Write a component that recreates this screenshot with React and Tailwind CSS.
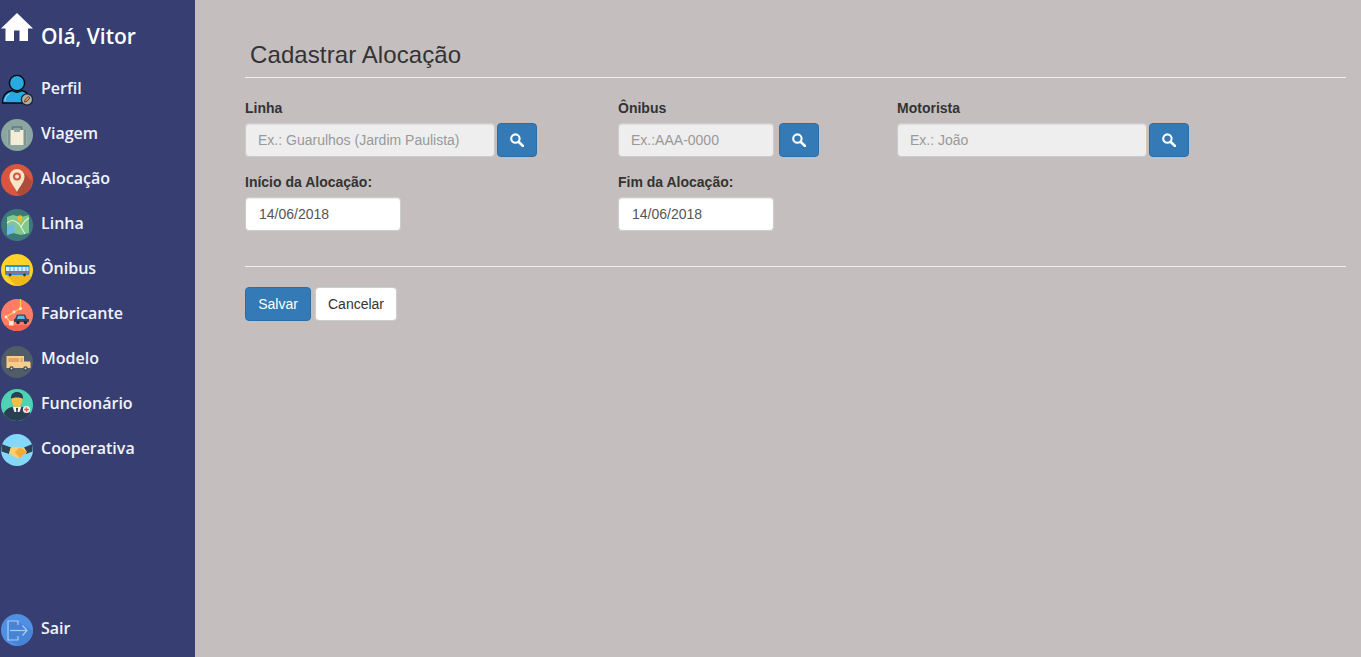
import React from 'react';

const IconPerfil = () => (
  <svg viewBox="0 0 32 32" className="w-8 h-8">
    <circle cx="16" cy="9" r="7.6" fill="#29a9e0" stroke="#05070f" strokeWidth="1.4" />
    <path d="M1.5 29 C1.5 21 6 17.5 11 16.5 C14 18.5 18 18.5 21 16.5 C25 17.5 27.5 20 28 24 L23 29 Z" fill="#29a9e0" stroke="#05070f" strokeWidth="1.4" />
    <path d="M4 27 C4 23.5 6 21 8.5 20" fill="none" stroke="#a5dcf5" strokeWidth="1" />
    <circle cx="26" cy="25.5" r="5.6" fill="#a8adb2" stroke="#20242c" strokeWidth="1.3" />
    <path d="M23.5 28 L24 25.6 L27.4 22.4 L29 24 L25.8 27.4 Z" fill="#ee8a25" stroke="#1a1a1a" strokeWidth="0.6" />
  </svg>
);

const IconViagem = () => (
  <svg viewBox="0 0 32 32" className="w-8 h-8">
    <circle cx="16" cy="16" r="16" fill="#8ba6a0" />
    <path d="M11.5 11 V8 H20.5 V11" fill="none" stroke="#66797a" strokeWidth="1.6" />
    <rect x="6.5" y="11" width="19" height="15" rx="1" fill="#f3ecd6" />
    <rect x="6.5" y="11" width="3" height="15" fill="#7f9390" />
    <rect x="22.5" y="11" width="3" height="15" fill="#7f9390" />
    <rect x="13" y="11" width="6" height="2" fill="#9aa8a2" />
  </svg>
);

const IconAlocacao = () => (
  <svg viewBox="0 0 32 32" className="w-8 h-8">
    <circle cx="16" cy="16" r="16" fill="#d9553f" />
    <path d="M20 6 L31 17 A16 16 0 0 1 19 31.7 L15 28 Z" fill="#b04a39" />
    <path d="M16 28 C13 22 8.5 18 8.5 12.5 A7.5 7.5 0 0 1 23.5 12.5 C23.5 18 19 22 16 28 Z" fill="#f6e6c8" />
    <circle cx="16" cy="12.5" r="4" fill="#d9553f" />
    <circle cx="16" cy="12.5" r="2" fill="#f6e6c8" />
  </svg>
);

const IconLinha = () => (
  <svg viewBox="0 0 32 32" className="w-8 h-8">
    <circle cx="16" cy="16" r="16" fill="#3b7a78" />
    <path d="M6 8 L12 6 L20 8 L28 6 V24 L20 26 L12 24 L6 26 Z" fill="#7fc98f" />
    <path d="M6 17 L13 15 L14 24 L12 24 L6 26 Z" fill="#6fb9e0" />
    <path d="M6 14 C10 10 14 11 18 15 C20 18 22 21 24 25 M28 9 C24 11 22 14 20 18" fill="none" stroke="#e8f2d8" strokeWidth="1.1" />
    <path d="M19 14 C17 11 16.5 10 16.5 8.8 A2.5 2.5 0 0 1 21.5 8.8 C21.5 10 21 11 19 14 Z" fill="#f1b82d" />
  </svg>
);

const IconOnibus = () => (
  <svg viewBox="0 0 32 32" className="w-8 h-8">
    <circle cx="16" cy="16" r="16" fill="#ffd32a" />
    <path d="M5 21 L28 21 L30.5 23 A16 16 0 0 1 15 31.8 Z" fill="#efb81f" />
    <rect x="4" y="11" width="24.5" height="10" rx="1.2" fill="#2f8fd0" />
    <rect x="5" y="13" width="22.5" height="4" fill="#d4eefb" />
    <path d="M9 13 V17 M13 13 V17 M17 13 V17 M21 13 V17 M25 13 V17" stroke="#2f8fd0" strokeWidth="0.7" />
    <rect x="4" y="18.5" width="24.5" height="1.3" fill="#e2574c" />
    <circle cx="9" cy="21" r="1.4" fill="#2d3a4a" />
    <circle cx="23.5" cy="21" r="1.4" fill="#2d3a4a" />
  </svg>
);

const IconFabricante = () => (
  <svg viewBox="0 0 32 32" className="w-8 h-8">
    <circle cx="16" cy="16" r="16" fill="#ff7d66" />
    <path d="M3.5 26 A16 16 0 0 0 28.5 26 Z" fill="#f4614c" />
    <path d="M19.5 0 V9.5 L13 13 L5 18 L10 24" fill="none" stroke="#f8d24e" strokeWidth="1.2" />
    <circle cx="19.5" cy="9.5" r="1.6" fill="#fbe9d8" />
    <circle cx="13" cy="13" r="1.4" fill="#fbe9d8" />
    <circle cx="5" cy="18" r="1.4" fill="#fbe9d8" />
    <rect x="8" y="22" width="4.5" height="4.5" fill="#fbe9d8" />
    <path d="M14 20 L16 15.5 H24 L26 20 H28 V23 H13 V20 Z" fill="#34475a" />
    <path d="M16 20 L17 16.8 H23 L24 20 Z" fill="#5fb8e8" />
    <circle cx="17" cy="23.5" r="1.7" fill="#1f2a36" />
    <circle cx="24.5" cy="23.5" r="1.7" fill="#1f2a36" />
  </svg>
);

const IconModelo = () => (
  <svg viewBox="0 0 32 32" className="w-8 h-8">
    <circle cx="16" cy="16" r="16" fill="#505c68" />
    <path d="M5.5 10 H23 V15.5 H28.5 Q29.5 15.5 29.5 17 V22 H5.5 Z" fill="#f6cd8c" />
    <rect x="7.5" y="12" width="10.5" height="4" fill="#e2a566" />
    <rect x="19.5" y="12" width="2.2" height="4" fill="#e2a566" />
    <circle cx="10.5" cy="22.5" r="2.2" fill="#3a434d" />
    <circle cx="10.5" cy="22.5" r="1" fill="#dcdcdc" />
    <circle cx="24.5" cy="22.5" r="2.2" fill="#3a434d" />
    <circle cx="24.5" cy="22.5" r="1" fill="#dcdcdc" />
  </svg>
);

const IconFuncionario = () => (
  <svg viewBox="0 0 32 32" className="w-8 h-8">
    <circle cx="16" cy="16" r="16" fill="#4dd3b4" />
    <path d="M2.5 24.5 C5 20 8 18.5 12 17.5 H20 C24 18.5 27 20 29.5 24.5 A16 16 0 0 1 2.5 24.5 Z" fill="#2a3f52" />
    <path d="M11.5 17.5 H20.5 L18.5 23 H13.5 Z" fill="#f4f6f6" />
    <path d="M15 19 H17 L16.6 23 H15.4 Z" fill="#1f2d3a" />
    <path d="M10.5 8 C10.5 14 12.5 18.5 16 18.5 C19.5 18.5 21.5 14 21.5 8 Z" fill="#f6be43" />
    <path d="M10 10 C9.5 5 12.5 3 16 3 C19.5 3 22.5 5 22 10 C20.5 8 11.5 8 10 10 Z" fill="#2a3f52" />
    <circle cx="25.5" cy="20.5" r="3.6" fill="#f0f4f4" />
    <path d="M25.5 18.2 V22.8 M23.2 20.5 H27.8" stroke="#ec4f43" strokeWidth="1.4" />
  </svg>
);

const IconCooperativa = () => (
  <svg viewBox="0 0 32 32" className="w-8 h-8">
    <circle cx="16" cy="16" r="16" fill="#84d9fb" />
    <path d="M0.5 10 L10 13.5 L8 20 L0.5 17.5 Z" fill="#2f4155" />
    <path d="M31.5 10 L23 13.5 L25 20 L31.5 17.5 Z" fill="#2f4155" />
    <path d="M9.5 14 L14 12.5 L18 13.5 L23 13.5 L26 18 L19 24 C17 24.5 15 24 14 23 L8 19.5 Z" fill="#fbd06a" />
    <path d="M14 18 L18 14 L21 14.5 L25.5 18 L19 24 L16 21" fill="#f2aa3d" />
  </svg>
);

const IconSair = () => (
  <svg viewBox="0 0 32 32" className="w-8 h-8">
    <circle cx="16" cy="16" r="16" fill="#4f90e4" />
    <path d="M20 9 L32 17 A16 16 0 0 1 18 31.8 L8 26 V7 Z" fill="#4784d6" />
    <path d="M17 11 V7 H7 V26 H17 V22" fill="none" stroke="#a9cbf5" strokeWidth="1.2" />
    <path d="M9 16.5 H25" stroke="#a9cbf5" strokeWidth="1.2" />
    <path d="M21.5 11.5 L26 16.5 L21.5 21.5" fill="none" stroke="#a9cbf5" strokeWidth="1.2" />
  </svg>
);

const menu = [
  { label: 'Perfil', icon: IconPerfil },
  { label: 'Viagem', icon: IconViagem },
  { label: 'Alocação', icon: IconAlocacao },
  { label: 'Linha', icon: IconLinha },
  { label: 'Ônibus', icon: IconOnibus },
  { label: 'Fabricante', icon: IconFabricante },
  { label: 'Modelo', icon: IconModelo, iconClass: 'mt-[2px]' },
  { label: 'Funcionário', icon: IconFuncionario },
  { label: 'Cooperativa', icon: IconCooperativa },
];

function MenuItem({ label, icon: Icon, iconClass = '' }) {
  return (
    <a className="flex items-start gap-2 pl-px h-[45px] pt-[7px]">
      <span className={`block w-8 h-8 ${iconClass}`}>
        <Icon />
      </span>
      <span className="mt-[2px] text-[16px] leading-6 font-semibold text-[#f1f3fa]">{label}</span>
    </a>
  );
}

function SearchButton() {
  return (
    <button className="w-10 h-[34px] rounded border border-[#2e6da4] bg-[#337ab7] flex items-center justify-center">
      <svg viewBox="0 0 14 14" className="w-[14px] h-[14px]">
        <circle cx="5.4" cy="5.6" r="4.2" fill="none" stroke="#fff" strokeWidth="2.1" />
        <path d="M8.8 9 L13 13" stroke="#fff" strokeWidth="2.5" strokeLinecap="round" />
      </svg>
    </button>
  );
}

function Label({ children }) {
  return <label className="block mb-[5px] text-[14px] leading-5 font-bold text-[#333]">{children}</label>;
}

function TextField({ placeholder, width }) {
  return (
    <input
      readOnly
      placeholder={placeholder}
      className={`${width} h-[34px] px-3 rounded border border-[#ccc] bg-[#eee] text-[14px] text-[#555] placeholder:text-[#999] shadow-[inset_0_1px_1px_rgba(0,0,0,0.075)]`}
    />
  );
}

function DateField() {
  return (
    <input
      readOnly
      value="14/06/2018"
      className="w-[156px] h-[34px] pl-[13px] pr-3 rounded border border-[#ccc] bg-white text-[14px] text-[#555] shadow-[inset_0_1px_1px_rgba(0,0,0,0.075)]"
    />
  );
}

export default function App() {
  return (
    <div className="flex h-screen bg-[#c4bebe] font-['Liberation_Sans',Arial,sans-serif] overflow-hidden">
      <aside className="w-[195px] shrink-0 bg-[#373f72] flex flex-col font-['Open_Sans',sans-serif]">
        <div className="h-[67px] flex items-start gap-2 pl-px pt-[13px]">
          <svg viewBox="0 0 32 28" className="w-8 h-7">
            <path d="M16 0 L32 15.5 H27 V28 H18.5 V17.5 H13 V28 H4.5 V15.5 H0 Z" fill="#fff" />
          </svg>
          <span className="mt-[9px] text-[21px] leading-7 font-semibold text-white">Olá, Vitor</span>
        </div>
        {menu.map((item) => (
          <MenuItem key={item.label} label={item.label} icon={item.icon} iconClass={item.iconClass} />
        ))}
        <div className="mt-auto pb-[5px]">
          <MenuItem label="Sair" icon={IconSair} />
        </div>
      </aside>

      <main className="flex-1 pl-[50px] pr-[15px]">
        <h1 className="pt-[42px] pb-[9px] pl-[5px] text-[24px] leading-[26px] font-normal tracking-[0.1px] text-[#333]">Cadastrar Alocação</h1>
        <hr className="border-0 border-t border-[#eee]" />

        <div className="pt-5 grid grid-cols-[373px_279px_1fr] gap-y-[15px]">
          <div>
            <Label>Linha</Label>
            <div className="flex items-center gap-[2px]">
              <TextField placeholder="Ex.: Guarulhos (Jardim Paulista)" width="w-[250px]" />
              <SearchButton />
            </div>
          </div>
          <div>
            <Label>Ônibus</Label>
            <div className="flex items-center gap-[5px]">
              <TextField placeholder="Ex.:AAA-0000" width="w-[156px]" />
              <SearchButton />
            </div>
          </div>
          <div>
            <Label>Motorista</Label>
            <div className="flex items-center gap-[2px]">
              <TextField placeholder="Ex.: João" width="w-[250px]" />
              <SearchButton />
            </div>
          </div>
          <div>
            <Label>Início da Alocação:</Label>
            <DateField />
          </div>
          <div>
            <Label>Fim da Alocação:</Label>
            <DateField />
          </div>
        </div>

        <hr className="mt-[35px] border-0 border-t border-[#eee]" />

        <div className="mt-5 flex gap-1">
          <button className="w-[66px] h-[34px] rounded border border-[#2e6da4] bg-[#337ab7] text-[14px] text-white">Salvar</button>
          <button className="w-[82px] h-[34px] rounded border border-[#ccc] bg-white text-[14px] text-[#333]">Cancelar</button>
        </div>
      </main>
    </div>
  );
}
